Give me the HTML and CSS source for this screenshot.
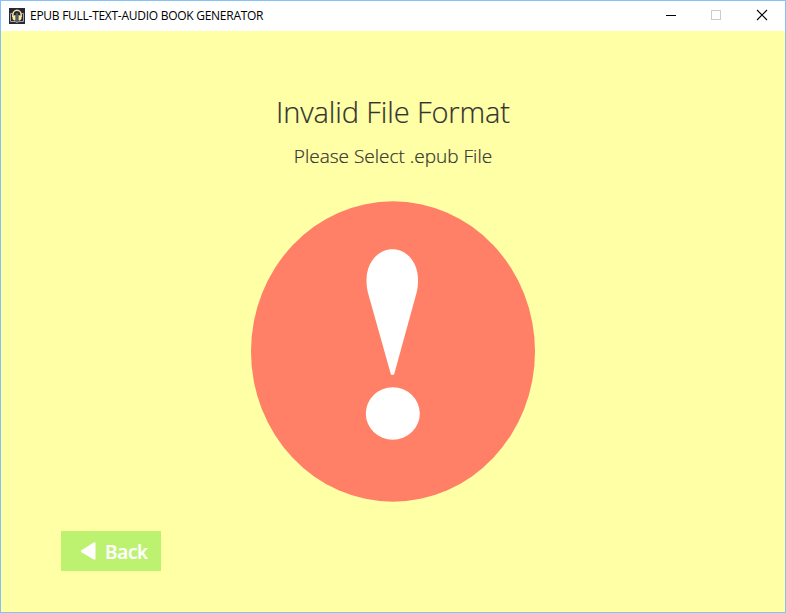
FILE: index.html
```html
<!DOCTYPE html>
<html lang="en">
<head>
<meta charset="utf-8">
<title>EPUB FULL-TEXT-AUDIO BOOK GENERATOR</title>
<link rel="stylesheet" href="styles.css">
</head>
<body>
<div class="window">
  <header class="titlebar">
    <svg class="app-icon" viewBox="0 0 16 16">
      <rect width="16" height="16" fill="#2b2635"/>
      <path d="M3.500 5.500h-2V13.500h4.500l2 1 2-1h4.500V5.500h-2" fill="none" stroke="#a5a3a8"/>
      <path d="M3.800 9V7a4.200 4.700 0 0 1 8.400 0V9" fill="none" stroke="#f3eea0" stroke-width="1.500"/>
      <path d="M3.500 8L6.500 7v5.500H5L3.500 11zM12.500 8L9.500 7v5.500H11l1.500-1.500z" fill="#f3eea0"/>
      <path d="M8 5v9" stroke="#a5a3a8" stroke-width=".8"/>
    </svg>
    <span class="app-title">EPUB FULL-TEXT-AUDIO BOOK GENERATOR</span>
    <div class="controls">
      <button class="control" aria-label="Minimize"><svg viewBox="0 0 10 10"><path d="M0 5.500h10" stroke="#000"/></svg></button>
      <button class="control maximize" aria-label="Maximize" disabled><svg viewBox="0 0 10 10"><rect x=".5" y=".5" width="9" height="9" fill="none" stroke="#ccc"/></svg></button>
      <button class="control" aria-label="Close"><svg viewBox="0 0 10 10"><path d="M0 0l10 10M10 0L0 10" stroke="#000" stroke-width="1.100"/></svg></button>
    </div>
  </header>
  <main class="content">
    <h1 class="heading">Invalid File Format</h1>
    <p class="message">Please Select .epub File</p>
    <svg class="alert" viewBox="0 0 284 301">
      <ellipse cx="142" cy="150.500" rx="142" ry="150.200" fill="#ff8066"/>
      <path d="M141.500 48.200C156 48.200 167 61.500 167 79C167 84 166.500 88 165.500 92L143 173.700H140L117 92C116 88 115.500 84 115.500 79C115.500 61.500 127 48.200 141.500 48.200Z" fill="#fff"/>
      <ellipse cx="141.800" cy="212.500" rx="27" ry="26.300" fill="#fff"/>
    </svg>
    <button class="back">
      <svg class="arrow" viewBox="0 0 16 20"><path d="M1.500 9.300L13.300 1.700Q15.500 .600 15.500 2.500V17.500Q15.500 19.400 13.300 18.300L1.500 11.300Q0 10.300 1.500 9.300Z" fill="#fff"/></svg>
      <span class="back-label">Back</span>
    </button>
  </main>
</div>
</body>
</html>
```
FILE: styles.css
```css
* { box-sizing: border-box; }
body { margin: 0; font-family: "Open Sans", "Noto Sans", sans-serif; }
.window {
  display: flex;
  flex-direction: column;
  width: 786px;
  height: 613px;
  overflow: hidden;
  border: 1px solid #84c1f4;
  background: #ffffa5;
}
.titlebar {
  display: flex;
  align-items: center;
  flex: 0 0 30px;
  padding-left: 8px;
  background: #fff;
}
.app-icon { width: 16px; height: 16px; margin: 0 5px 1px 0; }
.app-title {
  color: #000;
  font-size: 12px;
  line-height: 16px;
  letter-spacing: -0.27px;
  white-space: nowrap;
}
.controls { display: flex; margin-left: auto; }
.control {
  display: flex;
  align-items: flex-start;
  justify-content: flex-start;
  width: 45px;
  height: 30px;
  padding: 9px 0 0 17px;
  border: 0;
  background: none;
}
.maximize { width: 46px; }
.control svg { width: 10px; height: 10px; overflow: visible; }
.content {
  display: flex;
  flex: 1;
  flex-direction: column;
  align-items: center;
  padding-top: 60px;
  color: #333;
}
.heading, .message {
  margin: 0;
  font-weight: 300;
  white-space: nowrap;
  -webkit-text-stroke: 0.2px #333;
}
.heading { font-size: 29px; line-height: 42px; letter-spacing: -0.1px; }
.message { margin-top: 8px; font-size: 19px; line-height: 30px; }
.alert { width: 284px; height: 301px; margin-top: 30px; }
.back {
  display: flex;
  align-items: center;
  align-self: flex-start;
  width: 100px;
  height: 40px;
  margin: 29px 0 0 60px;
  padding: 0 0 0 19px;
  border: 0;
  background: #bdf271;
  color: #fff;
  font: 600 19px/38px "Open Sans", "Noto Sans", sans-serif;
}
.arrow { width: 16px; height: 20px; margin-right: 9px; }
.back-label { padding-top: 2px; letter-spacing: -0.3px; -webkit-text-stroke: 0.2px #fff; }
```
